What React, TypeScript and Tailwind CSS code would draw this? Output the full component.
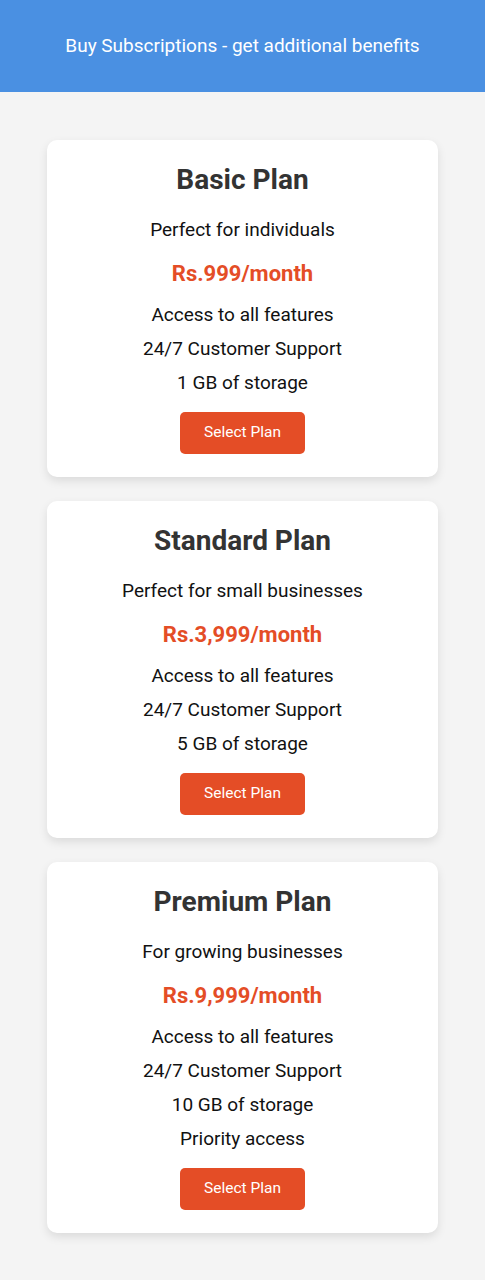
const plans = [
  {
    name: 'Basic Plan',
    tagline: 'Perfect for individuals',
    price: 'Rs.999/month',
    features: ['Access to all features', '24/7 Customer Support', '1 GB of storage'],
  },
  {
    name: 'Standard Plan',
    tagline: 'Perfect for small businesses',
    price: 'Rs.3,999/month',
    features: ['Access to all features', '24/7 Customer Support', '5 GB of storage'],
  },
  {
    name: 'Premium Plan',
    tagline: 'For growing businesses',
    price: 'Rs.9,999/month',
    features: ['Access to all features', '24/7 Customer Support', '10 GB of storage', 'Priority access'],
  },
];

export default function App() {
  return (
    <div className="min-h-screen bg-[#f4f4f4] font-['Roboto',sans-serif]">
      <header className="h-[92px] bg-[#4a90e2] flex items-center justify-center">
        <h1 className="text-white text-[19px] leading-6">Buy Subscriptions - get additional benefits</h1>
      </header>

      <main className="pt-12 pb-12 flex flex-col items-center gap-6">
        {plans.map((plan) => (
          <div
            key={plan.name}
            className="w-[391px] bg-white rounded-[10px] shadow-[0_4px_10px_rgba(0,0,0,0.1)] pt-5 pb-[23px] flex flex-col items-center text-center"
          >
            <h2 className="text-[28px] leading-10 font-bold text-[#333]">{plan.name}</h2>
            <p className="mt-[18px] text-[19px] leading-6 text-[#111]">{plan.tagline}</p>
            <p className="mt-[18px] text-[22px] leading-7 font-bold text-[#e44d26]">{plan.price}</p>
            <ul className="mt-[15px] flex flex-col gap-[10px]">
              {plan.features.map((f) => (
                <li key={f} className="text-[19px] leading-6 text-[#111]">{f}</li>
              ))}
            </ul>
            <button className="mt-[17px] w-[125px] h-[42px] bg-[#e44d26] text-white text-[15.5px] rounded-[5px]">
              Select Plan
            </button>
          </div>
        ))}
      </main>
    </div>
  );
}
